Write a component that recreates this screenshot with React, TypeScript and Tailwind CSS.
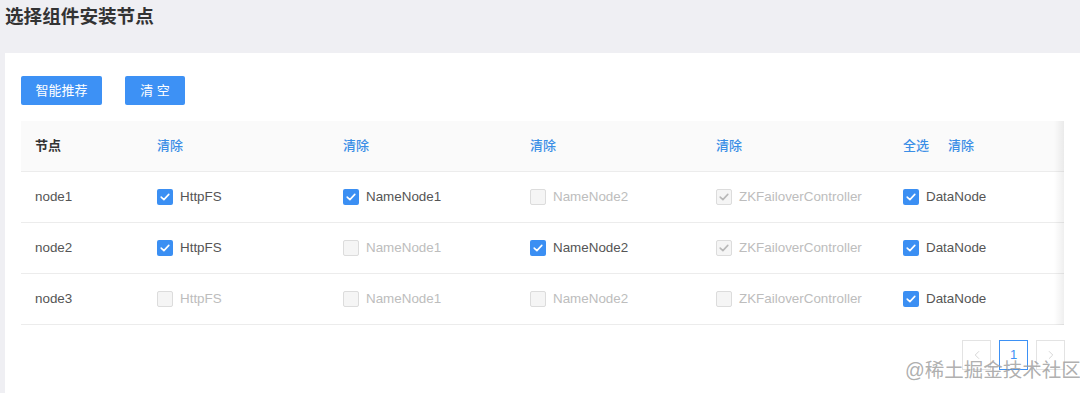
import { ChevronLeft, ChevronRight } from "lucide-react";

const CN = { fontFamily: '"Liberation Sans", "Noto Sans CJK SC", sans-serif' };

type Cell = { label: string; checked: boolean; disabled: boolean };

const rows: { node: string; cells: Cell[] }[] = [
  {
    node: "node1",
    cells: [
      { label: "HttpFS", checked: true, disabled: false },
      { label: "NameNode1", checked: true, disabled: false },
      { label: "NameNode2", checked: false, disabled: true },
      { label: "ZKFailoverController", checked: true, disabled: true },
      { label: "DataNode", checked: true, disabled: false },
    ],
  },
  {
    node: "node2",
    cells: [
      { label: "HttpFS", checked: true, disabled: false },
      { label: "NameNode1", checked: false, disabled: true },
      { label: "NameNode2", checked: true, disabled: false },
      { label: "ZKFailoverController", checked: true, disabled: true },
      { label: "DataNode", checked: true, disabled: false },
    ],
  },
  {
    node: "node3",
    cells: [
      { label: "HttpFS", checked: false, disabled: true },
      { label: "NameNode1", checked: false, disabled: true },
      { label: "NameNode2", checked: false, disabled: true },
      { label: "ZKFailoverController", checked: false, disabled: true },
      { label: "DataNode", checked: true, disabled: false },
    ],
  },
];

// column widths after the node column; last one takes the rest
const colW = ["w-[186px]", "w-[187px]", "w-[186px]", "w-[187px]", "flex-1"];

const Check = ({ color }: { color: string }) => (
  <svg width="10" height="8" viewBox="0 0 10 8" fill="none">
    <path d="M1.2 4.1 L3.9 6.6 L8.8 1.4" stroke={color} strokeWidth="1.6" strokeLinecap="round" strokeLinejoin="round" />
  </svg>
);

const Box = ({ checked, disabled }: { checked: boolean; disabled: boolean }) => {
  if (disabled) {
    return (
      <span className="w-4 h-4 rounded-[2px] border border-[#dcdcdc] bg-[#f5f5f5] flex items-center justify-center shrink-0">
        {checked && <Check color="#b8b8b8" />}
      </span>
    );
  }
  if (checked) {
    return (
      <span className="w-4 h-4 rounded-[2px] bg-[#3b8ff3] flex items-center justify-center shrink-0">
        <Check color="#ffffff" />
      </span>
    );
  }
  return <span className="w-4 h-4 rounded-[2px] border border-[#d9d9d9] bg-white shrink-0" />;
};

export default function App() {
  return (
    <div className="w-[1080px] h-[393px] bg-[#efeff3] overflow-hidden relative" style={CN}>
      <h1 className="pl-[5px] pt-[6px] h-[53px] text-[18.6px] font-bold text-[#333] leading-[22px]">选择组件安装节点</h1>

      <div className="ml-[5px] bg-white h-[340px] pl-4 pt-[23px]">
        <div className="flex gap-[23px]">
          <button className="w-[81px] h-[29px] rounded-[2px] bg-[#3d91f5] text-white text-[13px]">智能推荐</button>
          <button className="w-[60px] h-[29px] rounded-[2px] bg-[#3d91f5] text-white text-[13px]">清 空</button>
        </div>

        <div className="mt-4 w-[1043px] relative">
          <div className="flex h-[51px] items-center bg-[#fafafa] border-b border-[#ececec] text-[13px]">
            <div className="w-[136px] shrink-0 pl-[14px] font-bold text-[#333]">节点</div>
            <div className="w-[186px] shrink-0 text-[#3a8ee6] font-medium">清除</div>
            <div className="w-[187px] shrink-0 text-[#3a8ee6] font-medium">清除</div>
            <div className="w-[186px] shrink-0 text-[#3a8ee6] font-medium">清除</div>
            <div className="w-[187px] shrink-0 text-[#3a8ee6] font-medium">清除</div>
            <div className="flex-1 flex gap-[19px] text-[#3a8ee6] font-medium">
              <span>全选</span>
              <span>清除</span>
            </div>
          </div>
          {rows.map((r) => (
            <div key={r.node} className="flex h-[51px] items-center border-b border-[#ececec] text-[13.4px]">
              <div className="w-[136px] shrink-0 pl-[14px] text-[#555]">{r.node}</div>
              {r.cells.map((c, i) => (
                <div key={i} className={`${colW[i]} shrink-0 flex items-center gap-[7px]`}>
                  <Box checked={c.checked} disabled={c.disabled} />
                  <span className={c.disabled ? "text-[#bdbdbd]" : "text-[#555]"}>{c.label}</span>
                </div>
              ))}
            </div>
          ))}
          <div className="absolute right-0 top-0 bottom-0 w-[10px] bg-gradient-to-r from-transparent to-[#00000010]" />
        </div>

        <div className="flex justify-end gap-2 pr-[15px] mt-[15px]">
          <div className="w-[29px] h-[30px] border border-[#e3e3e3] flex items-center justify-center text-[#d0d0d0]">
            <ChevronLeft size={14} strokeWidth={1.5} />
          </div>
          <div className="w-[29px] h-[30px] border border-[#3d91f5] flex items-center justify-center text-[#3d91f5] text-[13px]">1</div>
          <div className="w-[29px] h-[30px] border border-[#e3e3e3] flex items-center justify-center text-[#d0d0d0]">
            <ChevronRight size={14} strokeWidth={1.5} />
          </div>
        </div>
      </div>

      <div className="absolute left-[905px] top-[357px] text-[19.5px] text-[#9a9a9a]/80 leading-[26px] whitespace-nowrap">@稀土掘金技术社区</div>
    </div>
  );
}
